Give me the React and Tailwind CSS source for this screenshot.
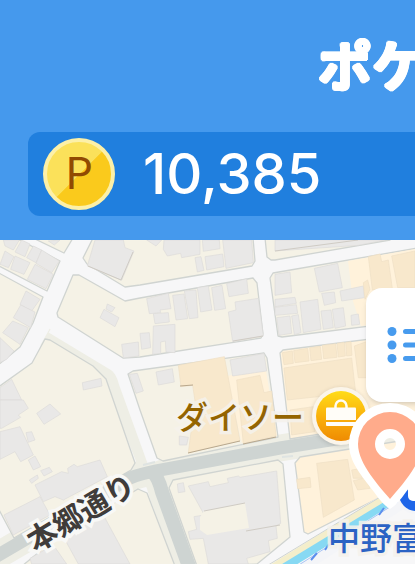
import React from "react";

// City blocks, outlined by their kerbs, in map units.
const blocks = [
  "33,238 64,253 73,238",
  "-3,238 20,240 60,261 47,291 -3,265",
  "-3,272 43,297 33,323 20,347 -3,366",
  "-3,388 32,363 45,339 50,340 93,366 106,379 135,463 131,470 14,538 -3,506",
  "73,275 79,275 125,301 140,298 253,278 257,283 263,334 261,338 140,357 123,358 58,317 57,313",
  "93,238 83,258 87,264 125,287 140,285 252,266 255,261 253,238",
  "265,238 267,257 271,260 275,260 390,240",
  "270,278 273,273 418,248 418,320 282,337 278,336",
  "128,374 133,371 264,353 267,358 278,437 163,461 157,458 140,410",
  "173,480 278,460 283,464 290,537 257,564 197,566 169,488",
  "22,566 60,535 138,489 147,493 175,566",
];

const shopBlocks = [
  "280,353 283,350 418,333 418,418 290,439",
  "295,463 300,457 418,438 418,478 308,534 304,532",
];

// Building footprints, grouped by survey sheet (three units per map unit).
const sheets = [
  {
    at: "translate(0 236) scale(0.33333)",
    grey: [
      "10,12 58,12 40,42 15,30",
      "65,12 90,24 75,62 45,48",
      "100,30 125,42 108,80 80,65",
      "125,42 178,75 155,110 108,82",
      "15,45 42,62 25,95 0,85",
      "45,60 90,80 72,115 32,100",
      "105,85 160,115 138,158 82,130",
      "145,15 180,12 163,27",
      "78,165 120,190 95,225 60,205",
      "62,207 105,228 92,275 40,245",
      "38,255 85,275 60,325 8,290",
      "0,305 42,345 20,370 0,380",
      "0,455 35,430 65,492 0,492",
      "285,12 370,12 375,35 402,45 365,133 262,90",
      "322,204 345,215 335,228 318,219",
      "312,220 357,245 345,272 300,245",
      "365,325 415,318 417,360 370,366",
      "247,440 303,427 306,450 250,462",
      "388,415 412,412 430,465 408,472",
    ],
    tan: [],
  },
  {
    at: "translate(0 400) scale(0.33333)",
    grey: [
      "5,0 70,0 85,25 55,45 62,52 5,85 0,85 0,0",
      "0,95 60,80 100,165 62,185 45,155 0,178",
      "110,40 150,12 182,42 132,73",
      "78,98 95,95 105,120 85,127",
      "85,180 105,168 122,200 100,210",
      "122,212 148,202 157,215 132,228",
      "88,240 112,225 115,235 95,250",
      "105,255 185,215 205,220 203,205 222,193 232,200 300,180 322,230 190,300 165,290 130,305",
      "12,345 120,290 150,345 40,405",
      "190,410 310,345 390,492 235,492",
      "90,475 160,435 200,492 95,492",
    ],
    tan: [],
  },
  {
    at: "translate(140 236) scale(0.33333)",
    grey: [
      "20,12 65,12 48,30",
      "72,12 180,12 180,55 125,65 122,52 82,60 70,40",
      "187,12 238,12 240,38 190,46",
      "165,65 183,62 192,103 172,108",
      "195,62 248,54 252,92 200,102",
      "248,12 335,12 340,80 258,97",
      "20,188 85,172 93,218 60,222 62,230 28,233",
      "40,233 85,230 88,258 45,263",
      "0,292 28,290 32,335 5,340",
      "98,178 132,174 143,248 108,252",
      "133,165 168,162 174,245 148,248",
      "172,155 205,150 216,222 182,228",
      "215,155 246,148 257,218 224,223",
      "260,143 320,128 325,172 267,182",
      "285,198 355,187 370,300 278,317 265,228 288,222",
      "40,270 105,265 105,350 78,348 76,315 62,318 62,352 38,355",
      "48,408 97,398 103,438 55,447",
      "270,372 372,352 380,405 278,420",
    ],
    tan: [
      "115,388 253,362 300,614 145,650 165,495 158,448 123,452",
      "290,432 360,418 372,470 395,465 408,600 310,622",
    ],
  },
  {
    at: "translate(140 400) scale(0.33333)",
    grey: [
      "145,258 205,245 210,260 265,248 262,235 295,228 300,232 410,213 422,370 408,378 412,415 385,422 390,455 320,475 325,492 205,492 190,415 150,418 145,395 170,388 162,350 193,345",
      "112,252 130,248 135,275 115,278",
      "118,108 145,112 140,135 118,135",
    ],
    tan: [],
  },
  {
    at: "translate(275 236) scale(0.33333)",
    grey: [
      "0,12 330,12 250,28 0,45",
      "0,115 45,108 50,170 0,178",
      "118,97 188,82 202,155 133,168",
      "195,165 265,150 268,185 200,195",
      "140,172 178,168 182,200 148,208",
      "0,190 60,184 64,202 0,212",
      "0,214 64,206 68,232 0,238",
      "5,245 45,240 50,292 12,298",
      "50,240 70,236 78,290 58,296",
      "75,198 128,190 138,280 85,290",
      "138,225 168,222 175,275 145,280",
      "172,220 205,215 212,270 180,277",
      "228,238 250,234 254,265 230,268",
    ],
    tan: [
      "280,62 315,54 320,77 340,72 352,158 292,162",
      "350,60 420,45 420,155 368,155",
      "265,140 278,132 285,160 270,190",
      "22,350 52,345 55,382 27,386",
      "56,344 98,337 102,375 60,380",
      "104,335 136,331 140,370 108,374",
      "142,328 182,323 186,364 146,368",
      "186,322 208,319 211,360 190,363",
      "212,319 228,317 231,358 215,360",
      "27,396 230,366 242,470 37,492",
      "238,330 280,315 280,425 250,425",
    ],
  },
  {
    at: "translate(275 400) scale(0.33333)",
    grey: [],
    tan: [
      "125,190 218,178 238,300 145,352",
      "65,238 105,232 108,262 68,266",
      "230,210 260,205 262,235 235,235",
      "235,242 272,234 285,265 248,270",
      "45,30 115,20 120,95 50,105",
    ],
  },
];

const avenue = "M-10 560 L130 478 Q140 474 155 471 L280 448 L418 426";
const sideStreet = "M152 472 Q158 476 162 492 L191 572";

function StreetMap() {
  return (
    <svg
      className="absolute inset-0 h-full w-full"
      viewBox="0 240 415 324"
      preserveAspectRatio="xMinYMin slice"
      aria-hidden="true"
    >
      <rect x="0" y="240" width="415" height="324" fill="#f7f7f8" />
      {/* wide pavements of the larger streets */}
      <g fill="none" stroke="#eeeee5">
        <path d="M45 337 L112 374 L148 466" strokeWidth="19" />
        <path d={avenue} strokeWidth="27" />
        <path d={sideStreet} strokeWidth="27" />
      </g>
      <path d="M52 327 L115 365 Q122 370 125 382 L154 462" fill="none" stroke="#f7f7f8" strokeWidth="13" />
      {blocks.map((p) => (
        <polygon key={p} points={p} fill="#f5f2e6" stroke="#d0d4d1" strokeWidth="1.3" strokeLinejoin="round" />
      ))}
      {shopBlocks.map((p) => (
        <polygon key={p} points={p} fill="#fff2db" stroke="#d0d4d1" strokeWidth="1.3" strokeLinejoin="round" />
      ))}
      <polygon points="348,261 415,249 415,319 361,326 353,301" fill="#fff2db" />
      <polygon points="225,376 266,371 277,436 242,443" fill="#fff2db" />
      <g fill="none" stroke="#ced4d2">
        <path d={avenue} strokeWidth="13" />
        <path d={sideStreet} strokeWidth="14" />
      </g>
      <path d="M143 465 L155 462 M282 457 L293 456" stroke="#dfe4e2" strokeWidth="2" />
      {sheets.map((s) => (
        <g key={s.at} transform={s.at} strokeWidth="2" strokeLinejoin="round">
          {s.grey.map((p) => (
            <polygon key={p} points={p} fill="#e9e8e7" stroke="#dcdbd9" />
          ))}
          {s.tan.map((p) => (
            <polygon key={p} points={p} fill="#f8e8cc" stroke="#eedfc5" />
          ))}
        </g>
      ))}
      <polygon points="204,511 245,503 249,528 207,535 200,530 200,517" fill="#f5f2e6" />
      <g fill="none" stroke="#cfcbc4" strokeWidth="1">
        <path d="M204 511 L245 503 M88 266 L121 280 L133 252 M233 341 L263 336 M275 251 L358 240 M246 531 L280 525" />
        <path d="M188 453 L240 441 M243 444 L276 437 M180 386 L193 385" stroke="#b9a88d" />
      </g>
      {/* river and its promenade */}
      <path d="M250 580 L418 481" stroke="#f7f7f8" strokeWidth="12" />
      <path d="M264 575 L418 480" stroke="#f4eecb" strokeWidth="11" />
      <path d="M260 570 L418 474" stroke="#d0d4d1" strokeWidth="1" />
      <path d="M275 573 L418 486" stroke="#87d9f3" strokeWidth="8" />
      <path d="M280 582 L418 494" stroke="#f4f5f8" strokeWidth="10" />
      <path d="M291 570 L418 489" stroke="#a9c4f3" strokeWidth="1" />
      <path d="M311 560 L317 553 M325 550 L329 544 M379 515 L384 508" stroke="#5c90ee" strokeWidth="2" />
    </svg>
  );
}

function ShopMarker() {
  return (
    <svg className="absolute left-[311px] top-[146px] h-[60px] w-[60px] drop-shadow-sm" viewBox="0 0 60 60" aria-hidden="true">
      <defs>
        <linearGradient id="shop" x1="0" y1="0" x2="0" y2="1">
          <stop offset="0" stopColor="#ffdc18" />
          <stop offset="0.5" stopColor="#fab20c" />
          <stop offset="1" stopColor="#ef8b02" />
        </linearGradient>
      </defs>
      <circle cx="30" cy="30" r="29" fill="#fbf5ea" />
      <circle cx="30" cy="30" r="25" fill="url(#shop)" />
      <path d="M24.500 22 V20 a5.500 5.500 0 0 1 11 0 V22" fill="none" stroke="#fffdf5" strokeWidth="2.500" />
      <path d="M16 21.500 h28 a1 1 0 0 1 1 1 V34 H15 V22.500 a1 1 0 0 1 1 -1 Z" fill="#fffdf8" />
      <path d="M15 36 H45 V39 a1 1 0 0 1 -1 1 H16 a1 1 0 0 1 -1 -1 Z" fill="#fffdf8" />
    </svg>
  );
}

function StationMarker() {
  return (
    <svg className="absolute left-[395px] top-[233px] h-[42px] w-[42px]" viewBox="0 0 42 42" aria-hidden="true">
      <circle cx="21" cy="21" r="20" fill="#f4f5f8" />
      <circle cx="21" cy="21" r="17" fill="#1f66e8" />
      <rect x="13" y="6" width="16" height="22" rx="5" fill="#fff" />
    </svg>
  );
}

function PlacePin() {
  return (
    <svg className="absolute left-[348px] top-[162px] h-[108px] w-[84px]" viewBox="0 0 84 108" aria-hidden="true">
      <path
        fill="#fff"
        fillRule="evenodd"
        d="M42 107 Q35 103 26 90 C14 74 1 60 1 42 a41 41 0 0 1 82 0 C83 60 70 74 58 90 Q49 103 42 107 Z M42 36 a6 6 0 1 0 0 12 a6 6 0 1 0 0 -12 Z"
      />
      <path
        fill="#ffab8b"
        fillRule="evenodd"
        d="M42 97 C32 85 10 62 10 42 a32 32 0 0 1 64 0 C74 62 52 85 42 97 Z M42 27 a15 15 0 1 0 0 30 a15 15 0 1 0 0 -30 Z"
      />
    </svg>
  );
}

function ListButton() {
  return (
    <button
      type="button"
      aria-label="リスト"
      className="absolute left-[366px] top-12 h-[114px] w-[114px] rounded-2xl bg-white pl-[21px] shadow-md"
    >
      <svg className="h-9 w-12" viewBox="0 0 48 36" aria-hidden="true">
        <g fill="#479bee">
          <circle cx="5" cy="4.500" r="4.500" />
          <circle cx="5" cy="18" r="4.500" />
          <circle cx="5" cy="31.500" r="4.500" />
          <rect x="16" y="2" width="32" height="5" rx="2.500" />
          <rect x="16" y="15.500" width="32" height="5" rx="2.500" />
          <rect x="16" y="29" width="32" height="5" rx="2.500" />
        </g>
      </svg>
    </button>
  );
}

const label =
  "absolute whitespace-nowrap text-[32px] leading-[40px] font-medium [paint-order:stroke] [-webkit-text-stroke:7px_#f5f2ecd9]";

export default function App() {
  return (
    <div className="flex min-h-screen w-full flex-col overflow-hidden bg-[#4599ed] font-['Noto_Sans_CJK_JP',sans-serif]">
      <header className="pb-6 pt-7 text-white">
        <h1 className="whitespace-nowrap pl-[318px] text-[54px] font-medium leading-[72px] [text-shadow:2px_0_white,-2px_0_white,0_2px_white,0_-2px_white,1px_2px_white,-1px_2px_white,1px_-2px_white,-1px_-2px_white,2px_1px_white,-2px_1px_white,2px_-1px_white,-2px_-1px_white]">
          ポケ
        </h1>
        <div className="ml-7 mt-8 flex h-[84px] items-center rounded-l-xl bg-[#207fde] pl-[15px]">
          <div className="flex size-[72px] shrink-0 justify-center rounded-full border-4 border-[#fcf0a8] bg-[linear-gradient(135deg,#fbe15a_50%,#faca1c_51%)] text-[44px] leading-[56px] text-[#914a02]">
            P
          </div>
          <p className="ml-7 font-['Inter',sans-serif] text-[56px] font-medium leading-[60px]">10,385</p>
        </div>
      </header>
      <main className="relative min-h-[324px] flex-1 overflow-hidden">
        <StreetMap />
        <span className={`${label} left-[176px] top-[155px] text-[#946400]`}>ダイソー</span>
        <ShopMarker />
        <StationMarker />
        <ListButton />
        <PlacePin />
        <span className={`${label} left-[328px] top-[276px] text-[#2c63c4]`}>中野富</span>
        <span className="absolute left-5 top-[251px] -rotate-31 whitespace-nowrap text-[30px] font-bold leading-[40px] text-[#403c3a] [-webkit-text-stroke:7px_#f8f8f6] [paint-order:stroke]">
          本郷通り
        </span>
      </main>
    </div>
  );
}
